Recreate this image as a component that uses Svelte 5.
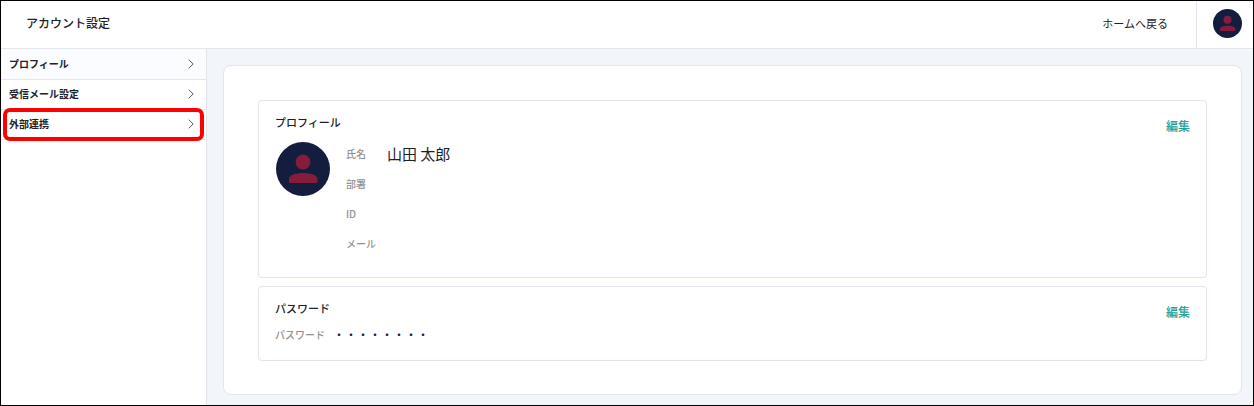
<script>
    let menu = ["プロフィール", "受信メール設定", "外部連携"];
    let selected = 0;
    let marked = 2;

    let profile = [
        { label: "氏名", value: "山田 太郎" },
        { label: "部署", value: "" },
        { label: "ID", value: "" },
        { label: "メール", value: "" },
    ];
</script>

<svelte:head>
    <title>アカウント設定</title>
</svelte:head>

<div class="page">
    <header class="header">
        <h1>アカウント設定</h1>
        <div class="headerRight">
            <a class="home" href="#home">ホームへ戻る</a>
            <button class="userBtn" type="button" aria-label="アカウント">
                <svg class="avatarSmall" viewBox="0 0 54 54">
                    <circle cx="27" cy="27" r="27" fill="#151d3f" />
                    <circle cx="27" cy="20" r="7.4" fill="#851c3c" />
                    <path d="M13 39.5V37C13 33 20 31 27 31S41.5 33 41.5 37V39.5Q41.5 41 40 41H14.5Q13 41 13 39.5Z" fill="#851c3c" />
                </svg>
            </button>
        </div>
    </header>

    <div class="body">
        <nav class="sidebar">
            {#each menu as item, i}
            <a class="menuItem" class:selected={i === selected} class:marked={i === marked} href="#menu{i}" on:click={() => selected = i}>
                <span>{item}</span>
                <svg class="arrow" viewBox="0 0 6 10">
                    <path d="M0.7 0.7L5.2 5L0.7 9.3" fill="none" stroke="currentColor" />
                </svg>
            </a>
            {/each}
        </nav>

        <main class="content">
            <div class="card">
                <section class="panel">
                    <div class="panelHead">
                        <h2>プロフィール</h2>
                        <button class="edit" type="button">編集</button>
                    </div>
                    <div class="profile">
                        <svg class="avatar" viewBox="0 0 54 54">
                            <circle cx="27" cy="27" r="27" fill="#151d3f" />
                            <circle cx="27" cy="20" r="7.4" fill="#851c3c" />
                            <path d="M13 39.5V37C13 33 20 31 27 31S41.5 33 41.5 37V39.5Q41.5 41 40 41H14.5Q13 41 13 39.5Z" fill="#851c3c" />
                        </svg>
                        <dl class="fields">
                            {#each profile as field}
                            <div class="field">
                                <dt>{field.label}</dt>
                                <dd>{field.value}</dd>
                            </div>
                            {/each}
                        </dl>
                    </div>
                </section>

                <section class="panel">
                    <div class="panelHead">
                        <h2>パスワード</h2>
                        <button class="edit" type="button">編集</button>
                    </div>
                    <dl class="password">
                        <dt>パスワード</dt>
                        <dd>・・・・・・・・</dd>
                    </dl>
                </section>
            </div>
        </main>
    </div>
</div>

<style>
    .page {
        box-sizing: border-box;
        min-height: 100vh;
        display: flex;
        flex-direction: column;
        border: 1px solid #000000;
        background-color: white;
        color: #1d2129;
        font-family: "Noto Sans CJK JP", sans-serif;
        font-size: 11px;
        line-height: 16px;
    }

    h1, h2, dl, dd {
        margin: 0;
    }

    a {
        color: inherit;
        text-decoration: none;
    }

    button {
        padding: 0;
        border: none;
        background: none;
        font-family: inherit;
        cursor: pointer;
    }

    .header {
        flex: 0 0 47px;
        display: flex;
        justify-content: space-between;
        align-items: center;
        padding-left: 25px;
        border-bottom: 1px solid #e3e7ed;
    }

    h1 {
        padding-bottom: 4px;
        font-size: 12px;
        font-weight: 500;
    }

    .headerRight {
        align-self: stretch;
        display: flex;
        align-items: center;
        gap: 28px;
    }

    .home {
        padding-bottom: 4px;
    }

    .userBtn {
        align-self: stretch;
        display: flex;
        align-items: center;
        padding: 0 11px 2px 16px;
        border-left: 1px solid #e1e4ec;
    }

    .avatarSmall {
        width: 29px;
        height: 29px;
    }

    .body {
        flex: 1;
        display: flex;
    }

    .sidebar {
        flex: 0 0 205px;
        border-right: 1px solid #e1e5eb;
    }

    .menuItem {
        position: relative;
        box-sizing: border-box;
        height: 30px;
        display: flex;
        justify-content: space-between;
        align-items: center;
        padding: 0 12px 1px 8px;
        border-bottom: 1px solid #e3e7ed;
        font-size: 10px;
        font-weight: 700;
    }

    .selected {
        height: 31px;
        background-color: #fafcff;
    }

    .marked::after {
        content: "";
        position: absolute;
        inset: -2px 2px -2px 2px;
        border: 4px solid #ff0000;
        border-radius: 7px;
    }

    .arrow {
        width: 6px;
        height: 10px;
        color: #50606c;
    }

    .content {
        flex: 1;
        padding: 16px 11px 10px 16px;
        background-color: #f2f6fa;
    }

    .card {
        display: flex;
        flex-direction: column;
        gap: 8px;
        padding: 34px;
        padding-bottom: 33px;
        border: 1px solid #e2e5ec;
        border-radius: 8px;
        background-color: white;
    }

    .panel {
        padding: 13px 16px 17px 16px;
        border: 1px solid #e2e4ed;
        border-radius: 4px;
    }

    .panelHead {
        display: flex;
        justify-content: space-between;
        align-items: flex-start;
    }

    h2 {
        font-size: 11px;
        font-weight: 500;
    }

    .edit {
        padding-top: 4px;
        color: #26a196;
        font-size: 12px;
        font-weight: 500;
        line-height: 16px;
    }

    .profile {
        display: flex;
        gap: 16px;
        padding-left: 1px;
    }

    .avatar {
        width: 54px;
        height: 54px;
        margin-top: 8px;
    }

    .fields {
        flex: 1;
        padding: 5px 0 1px;
    }

    .field {
        height: 30px;
        display: flex;
        align-items: center;
    }

    dt {
        color: #929292;
        font-size: 10px;
        font-weight: 500;
    }

    .field dt {
        width: 41px;
    }

    .field dd {
        font-size: 15px;
    }

    .password {
        display: flex;
        align-items: center;
        gap: 8px;
        padding-top: 7px;
    }

    .password dd {
        font-size: 12px;
    }
</style>
